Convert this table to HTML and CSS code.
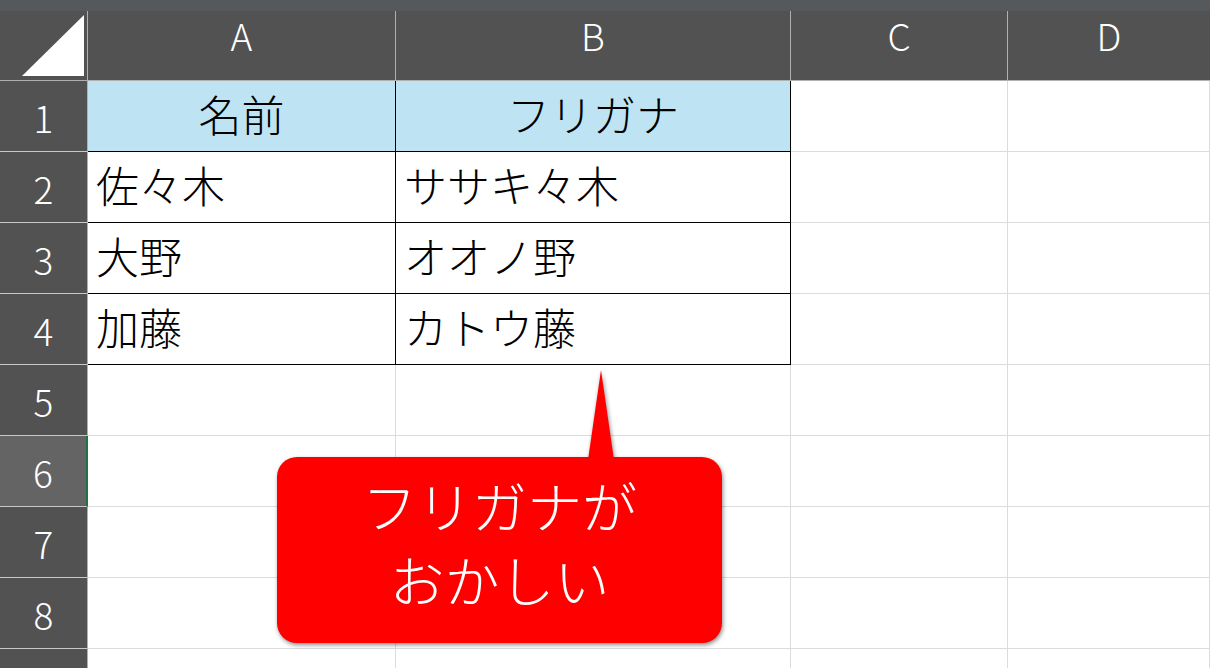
FILE: index.html
```html
<!DOCTYPE html>
<html lang="ja">
<head>
<meta charset="utf-8">
<title>フリガナ</title>
<link rel="stylesheet" href="styles.css">
</head>
<body>
<div class="topbar"></div>
<div class="sheet">
  <div class="corner"><svg width="62" height="62" viewBox="0 0 62 62"><polygon points="0,61 62,0 62,61" fill="#ffffff"/></svg></div>
  <div class="colh">A</div>
  <div class="colh">B</div>
  <div class="colh">C</div>
  <div class="colh last">D</div>

  <div class="rowh">1</div>
  <div class="cell tb head">名前</div>
  <div class="cell tb head">フリガナ</div>
  <div class="cell"></div>
  <div class="cell"></div>

  <div class="rowh">2</div>
  <div class="cell tb">佐々木</div>
  <div class="cell tb">ササキ々木</div>
  <div class="cell"></div>
  <div class="cell"></div>

  <div class="rowh">3</div>
  <div class="cell tb">大野</div>
  <div class="cell tb">オオノ野</div>
  <div class="cell"></div>
  <div class="cell"></div>

  <div class="rowh">4</div>
  <div class="cell tb">加藤</div>
  <div class="cell tb">カトウ藤</div>
  <div class="cell"></div>
  <div class="cell"></div>

  <div class="rowh">5</div>
  <div class="cell"></div>
  <div class="cell"></div>
  <div class="cell"></div>
  <div class="cell"></div>

  <div class="rowh sel">6</div>
  <div class="cell"></div>
  <div class="cell"></div>
  <div class="cell"></div>
  <div class="cell"></div>

  <div class="rowh">7</div>
  <div class="cell"></div>
  <div class="cell"></div>
  <div class="cell"></div>
  <div class="cell"></div>

  <div class="rowh">8</div>
  <div class="cell"></div>
  <div class="cell"></div>
  <div class="cell"></div>
  <div class="cell"></div>

  <div class="rowh"></div>
  <div class="cell"></div>
  <div class="cell"></div>
  <div class="cell"></div>
  <div class="cell"></div>
</div>

<div class="callout">
  <div class="tail"></div>
  <div class="bubble">フリガナが<br>おかしい</div>
</div>
</body>
</html>
```

FILE: styles.css
```css
html, body {
  margin: 0;
  padding: 0;
  background: #ffffff;
  overflow: hidden;
}
body {
  width: 1210px;
  height: 668px;
  position: relative;
  font-family: "Noto Sans CJK JP", "Noto Sans", sans-serif;
}
.topbar {
  height: 11px;
  background: #55595c;
}
.sheet {
  display: grid;
  grid-template-columns: 88px 308px 395px 217px 202px;
  grid-template-rows: 70px repeat(9, 71px);
}
.corner {
  background: #525252;
  border-right: 1px solid #b0b0b0;
  border-bottom: 1px solid #b0b0b0;
  box-sizing: border-box;
  display: flex;
  align-items: flex-start;
  justify-content: flex-start;
  padding: 4px 0 0 22px;
}
.colh {
  background: #525252;
  color: #ffffff;
  font-size: 37px;
  font-weight: 300;
  display: flex;
  justify-content: center;
  align-items: center;
  padding-bottom: 20px;
  box-sizing: border-box;
  border-right: 1px solid #b0b0b0;
  border-bottom: 1px solid #b0b0b0;
  line-height: 1;
}
.colh.last { border-right: none; }
.rowh {
  background: #525252;
  color: #ffffff;
  font-size: 37px;
  font-weight: 300;
  display: flex;
  justify-content: center;
  align-items: center;
  box-sizing: border-box;
  border-right: 1px solid #b0b0b0;
  border-bottom: 1px solid #c8c8c8;
  line-height: 1;
  padding-top: 3px;
}
.rowh.sel {
  background: #646464;
  border-right: 2px solid #217346;
}
.cell {
  box-sizing: border-box;
  border-right: 1px solid #dcdcdc;
  border-bottom: 1px solid #dcdcdc;
  font-size: 43px;
  font-weight: 300;
  color: #000000;
  display: flex;
  align-items: center;
  padding: 0 0 5px 8px;
  white-space: nowrap;
  line-height: 1;
}
.cell.tb {
  border-right-color: #000000;
  border-bottom-color: #000000;
}
.cell.head {
  background: #bee4f4;
  justify-content: center;
  padding-left: 0;
}
.callout {
  position: absolute;
  left: 277px;
  top: 370px;
  width: 445px;
  height: 273px;
  filter: drop-shadow(1px 2px 2px rgba(0,0,0,0.45));
}
.tail {
  position: absolute;
  left: 311px;
  top: 0;
  width: 26px;
  height: 90px;
  background: #ff0000;
  clip-path: polygon(50% 0, 100% 100%, 0 100%);
}
.bubble {
  position: absolute;
  left: 0;
  top: 87px;
  width: 445px;
  height: 186px;
  background: #ff0000;
  border-radius: 20px;
  color: #ffffff;
  font-size: 55px;
  font-weight: 300;
  line-height: 74px;
  text-align: center;
  box-sizing: border-box;
  padding-top: 10px;
}
```
